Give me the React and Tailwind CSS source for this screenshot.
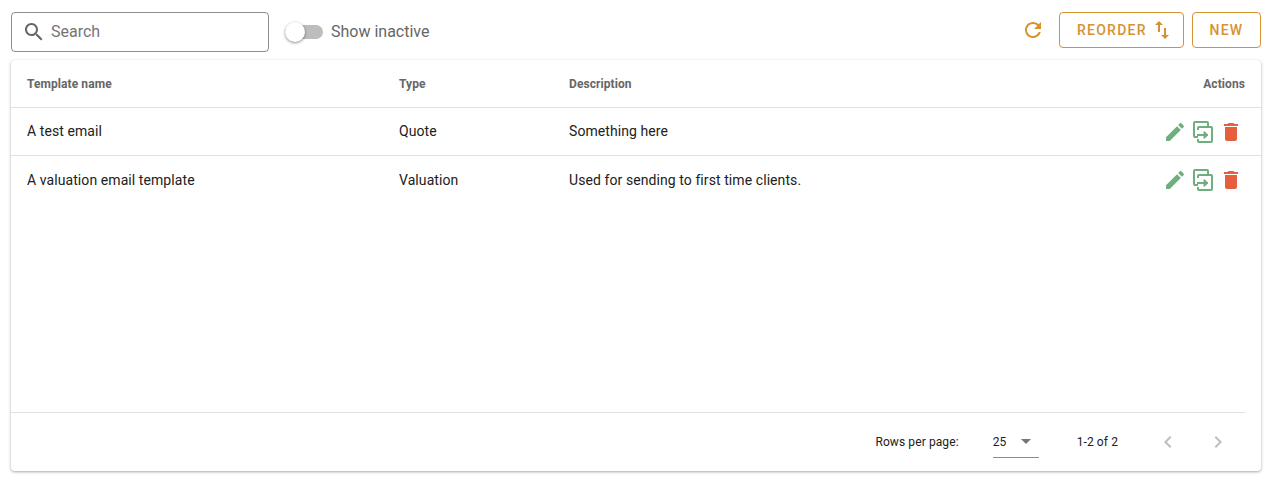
import { useState } from "react";

const rows = [
  { name: "A test email", type: "Quote", description: "Something here", height: "h-[47px]", textPad: "pb-[1px]" },
  { name: "A valuation email template", type: "Valuation", description: "Used for sending to first time clients.", height: "h-12", textPad: "" },
];

function Icon({ d, className }) {
  return (
    <svg viewBox="0 0 24 24" fill="currentColor" className={className}>
      <path d={d} />
    </svg>
  );
}

function CopyIcon() {
  return (
    <svg viewBox="0 0 22 24" fill="none" stroke="currentColor" strokeWidth="2" className="w-[22px] h-6 text-[#6fae7f]">
      <path d="M6 17H3a1 1 0 0 1-1-1V3a1 1 0 0 1 1-1H15a1 1 0 0 1 1 1v3" />
      <path d="M6 10V8a1 1 0 0 1 1-1h12a1 1 0 0 1 1 1v13a1 1 0 0 1-1 1H7a1 1 0 0 1-1-1v-2" />
      <path d="M5 15h8" />
      <path d="M12 11.5v7l4-3.5z" fill="currentColor" strokeWidth="1" />
    </svg>
  );
}

function Row({ row }) {
  return (
    <div className={`flex items-center pr-4 text-sm tracking-[0.08px] text-[#212121] ${row.height}`}>
      <div className={`flex flex-1 pl-4 ${row.textPad}`}>
        <div className="w-[372px]">{row.name}</div>
        <div className="w-[170px]">{row.type}</div>
        <div className="flex-1">{row.description}</div>
      </div>
      <div className="flex items-center gap-[5px] pr-[2px]">
        <Icon
          className="w-6 h-6 text-[#6fae7f]"
          d="M3 17.25V21h3.75L17.81 9.94l-3.75-3.75L3 17.25zM20.71 7.04c.39-.39.39-1.02 0-1.41l-2.34-2.34c-.39-.39-1.02-.39-1.41 0l-1.83 1.83 3.75 3.75 1.83-1.83z"
        />
        <CopyIcon />
        <Icon
          className="w-6 h-6 text-[#e55f3f]"
          d="M6 19c0 1.1.9 2 2 2h8c1.1 0 2-.9 2-2V7H6v12zM19 4h-3.5l-1-1h-5l-1 1H5v2h14V4z"
        />
      </div>
    </div>
  );
}

export default function App() {
  const [inactive, setInactive] = useState(false);

  return (
    <div className="h-[483px] bg-white pl-[11px] pr-[13px] pt-3 font-['Roboto',sans-serif]">
      <div className="flex items-center h-10">
        <div className="flex items-center w-[258px] h-10 border border-[#8c8c8c] rounded pl-[10px] text-[#757575]">
          <Icon
            className="w-6 h-6 text-[#666666]"
            d="M15.5 14h-.79l-.28-.27C15.41 12.59 16 11.11 16 9.5 16 5.91 13.09 3 9.5 3S3 5.91 3 9.5 5.91 16 9.5 16c1.61 0 3.09-.59 4.23-1.57l.27.28v.79l5 4.99L20.49 19l-4.99-5zm-6 0C7.01 14 5 11.99 5 9.5S7.01 5 9.5 5 14 7.01 14 9.5 11.99 14 9.5 14z"
          />
          <span className="ml-[5px] text-base">Search</span>
        </div>

        <button
          type="button"
          onClick={() => setInactive(!inactive)}
          className="relative ml-[16px] w-[38px] h-[14px] rounded-full bg-[#bdbdbd]"
        >
          <span className="absolute left-0 -top-[3px] w-5 h-5 rounded-full bg-white shadow-[0_1px_3px_rgba(0,0,0,0.45)]" />
        </button>
        <span className="ml-[8px] text-base text-[#666666]">Show inactive</span>

        <div className="ml-auto self-start flex items-center">
          <Icon
            className="w-6 h-6 mr-[14px] text-[#d69232]"
            d="M17.65 6.35C16.2 4.9 14.21 4 12 4c-4.42 0-7.99 3.58-7.99 8s3.57 8 7.99 8c3.73 0 6.84-2.55 7.73-6h-2.08c-.82 2.33-3.04 4-5.65 4-3.31 0-6-2.69-6-6s2.69-6 6-6c1.66 0 3.14.69 4.22 1.78L13 11h7V4l-2.35 2.35z"
          />
          <button
            type="button"
            className="flex items-center w-[125px] h-9 pl-[17px] border border-[#d69232] rounded text-sm font-medium tracking-[1.25px] text-[#d69232]"
          >
            REORDER
            <Icon
              className="w-6 h-6 ml-[3px]"
              d="M16 17.01V10h-2v7.01h-3L15 21l4-3.99h-3zM9 3L5 6.99h3V14h2V6.99h3L9 3z"
            />
          </button>
          <button
            type="button"
            className="w-[69px] h-9 ml-2 border border-[#d69232] rounded text-sm font-medium tracking-[1.25px] text-[#d69232]"
          >
            NEW
          </button>
        </div>
      </div>

      <div className="flex flex-col mt-2 h-[411px] bg-white rounded shadow-[0_1px_3px_rgba(0,0,0,0.35)]">
        <div className="flex items-center h-12 pl-4 pr-4 border-b border-[#e0e0e0] text-xs font-bold tracking-[0.08px] text-[#666666]">
          <div className="w-[372px]">Template name</div>
          <div className="w-[170px]">Type</div>
          <div className="flex-1">Description</div>
          <div>Actions</div>
        </div>

        <Row row={rows[0]} />
        <div className="border-t border-[#e0e0e0]" />
        <Row row={rows[1]} />

        <div className="mt-auto mr-4 h-[59px] border-t border-[#e0e0e0] flex items-center justify-end text-xs tracking-[0.1px] text-[#212121]">
          <span>Rows per page:</span>
          <div className="flex items-center w-[46px] h-8 ml-[34px] border-b border-[#8c8c8c]">
            <span>25</span>
            <svg viewBox="0 0 10 5" className="w-[10px] h-[5px] ml-[15px] text-[#757575]" fill="currentColor">
              <path d="M0 0h10L5 5z" />
            </svg>
          </div>
          <span className="ml-[38px]">1-2 of 2</span>
          <Icon
            className="w-6 h-6 ml-[38px] text-[#bdbdbd]"
            d="M15.41 7.41L14 6l-6 6 6 6 1.41-1.41L10.83 12z"
          />
          <Icon
            className="w-6 h-6 ml-[26px] mr-[15px] text-[#bdbdbd]"
            d="M10 6L8.59 7.41 13.17 12l-4.58 4.59L10 18l6-6z"
          />
        </div>
      </div>
    </div>
  );
}
